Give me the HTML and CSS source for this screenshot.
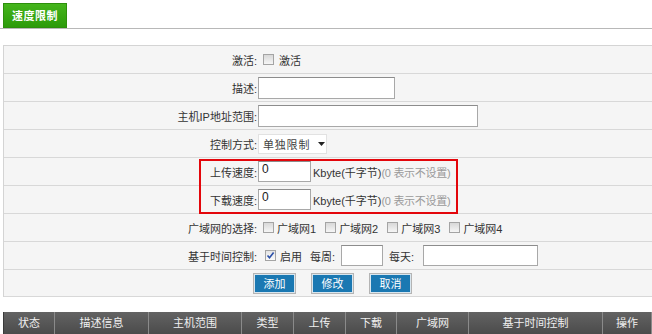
FILE: index.html
```html
<!DOCTYPE html>
<html lang="zh-CN">
<head>
    <meta charset="UTF-8">
    <title>速度限制</title>
    <link rel="stylesheet" href="styles.css">
</head>
<body>
    <div class="tabs">
        <div class="tab">速度限制</div>
    </div>

    <div class="form">
        <div class="row">
            <div class="lbl">激活:</div>
            <div class="val"><span class="chk"></span><span class="txt">激活</span></div>
        </div>
        <div class="row">
            <div class="lbl">描述:</div>
            <div class="val"><input class="field w-desc" type="text"></div>
        </div>
        <div class="row">
            <div class="lbl">主机IP地址范围:</div>
            <div class="val"><input class="field w-ip" type="text"></div>
        </div>
        <div class="row">
            <div class="lbl">控制方式:</div>
            <div class="val">
                <div class="select"><span>单独限制</span>
                    <svg width="7" height="4" viewBox="0 0 7 4"><path d="M0 0h7L3.5 4z" fill="#222"/></svg>
                </div>
            </div>
        </div>

        <div class="hl">
            <div class="row">
                <div class="lbl">上传速度:</div>
                <div class="val"><input class="field w-speed" type="text" value="0"><span class="unit">Kbyte(千字节)</span><span class="hint">(0 表示不设置)</span></div>
            </div>
            <div class="row">
                <div class="lbl">下载速度:</div>
                <div class="val"><input class="field w-speed" type="text" value="0"><span class="unit">Kbyte(千字节)</span><span class="hint">(0 表示不设置)</span></div>
            </div>
            <div class="mark"></div>
        </div>

        <div class="row">
            <div class="lbl">广域网的选择:</div>
            <div class="val wans">
                <span class="opt"><span class="chk"></span><span class="txt">广域网1</span></span>
                <span class="opt"><span class="chk"></span><span class="txt">广域网2</span></span>
                <span class="opt"><span class="chk"></span><span class="txt">广域网3</span></span>
                <span class="opt"><span class="chk"></span><span class="txt">广域网4</span></span>
            </div>
        </div>
        <div class="row">
            <div class="lbl">基于时间控制:</div>
            <div class="val time">
                <span class="chk on"><svg width="9" height="9" viewBox="0 0 9 9"><path d="M1.5 4.5l2 2.3L7.6 1.5" fill="none" stroke="#2a4fa8" stroke-width="1.6"/></svg></span>
                <span class="txt">启用</span>
                <span class="txt week">每周:</span>
                <input class="field w-week" type="text">
                <span class="txt day">每天:</span>
                <input class="field w-day" type="text">
            </div>
        </div>
        <div class="row buttons">
            <button class="btn">添加</button>
            <button class="btn">修改</button>
            <button class="btn">取消</button>
        </div>
    </div>

    <div class="list-head">
        <div>状态</div>
        <div>描述信息</div>
        <div>主机范围</div>
        <div>类型</div>
        <div>上传</div>
        <div>下载</div>
        <div>广域网</div>
        <div>基于时间控制</div>
        <div>操作</div>
    </div>
</body>
</html>
```

FILE: styles.css
```css
* {
    margin: 0;
    padding: 0;
    box-sizing: border-box;
}
body {
    font-family: 'Liberation Sans', 'Noto Sans CJK SC', sans-serif;
    font-size: 11px;
    color: #333;
    background-color: #fff;
    overflow: hidden;
}
.tabs {
    padding: 3px 0 0 3px;
    border-bottom: 1px solid #b8b8b8;
    height: 29px;
}
.tab {
    width: 64px;
    height: 25px;
    line-height: 25px;
    text-align: center;
    color: #fff;
    font-weight: bold;
    letter-spacing: 0.5px;
    background: linear-gradient(#45b51c, #2c9b0a);
    border: 1px solid #2d8f0c;
}
.form {
    margin: 16px 0 0 3px;
    border-top: 1px solid #d4d4d4;
    border-left: 1px solid #d4d4d4;
    background-color: #f5f5f5;
}
.row {
    display: grid;
    grid-template-columns: 254px 1fr;
    align-items: center;
    height: 28px;
    border-bottom: 1px solid #d8d8d8;
}
.lbl {
    text-align: right;
    padding-right: 1px;
}
.val {
    display: flex;
    align-items: center;
    white-space: nowrap;
}
.txt {
    margin-left: 5px;
}
.chk {
    display: inline-flex;
    align-items: center;
    justify-content: center;
    flex-shrink: 0;
    width: 11px;
    height: 11px;
    margin-left: 5px;
    border: 1px solid #a4a4a4;
    background: linear-gradient(#d8d8d8, #f6f6f6);
}
.chk.on {
    margin-left: 7px;
    background: linear-gradient(#e4e4e4, #fafafa);
}
.field {
    height: 22px;
    border: 1px solid #a8a8a8;
    border-top-color: #8c8c8c;
    background-color: #fff;
    font-family: 'Liberation Sans', sans-serif;
    font-size: 12px;
    color: #222;
    padding: 0 3px 6px;
    outline: none;
}
.w-desc { width: 137px; }
.w-ip { width: 220px; }
.w-speed { width: 53px; height: 21px; }
.w-week { width: 42px; height: 21px; margin-left: 6px; }
.w-day { width: 115px; height: 21px; margin-left: 9px; }
.select {
    display: flex;
    align-items: center;
    gap: 8px;
    width: 69px;
    height: 20px;
    padding-left: 4px;
    border: 1px solid #e2e2e2;
    background-color: #fff;
    font-size: 11px;
    letter-spacing: 0.8px;
    color: #444;
    white-space: nowrap;
}
.select svg {
    flex-shrink: 0;
}
.hl {
    position: relative;
}
.mark {
    position: absolute;
    left: 195px;
    top: 1px;
    width: 259px;
    height: 55px;
    border: 2px solid #e3060b;
}
.unit {
    margin-left: 2px;
    color: #333;
}
.hint {
    color: #9a9a9a;
    letter-spacing: -0.3px;
}
.wans .txt {
    margin-left: 3px;
}
.wans .opt + .opt {
    margin-left: 4px;
}
.time .txt {
    margin-left: 4px;
}
.time .week {
    margin-left: 8px;
}
.time .day {
    margin-left: 6px;
}
.buttons {
    display: flex;
    gap: 15px;
    padding-left: 249px;
    height: 27px;
}
.btn {
    width: 43px;
    height: 21px;
    background-color: #1a78b2;
    border: 1px solid #b4b4b4;
    box-shadow: inset 0 0 0 1px #d8e6ef;
    color: #fff;
    font-family: 'Liberation Sans', 'Noto Sans CJK SC', sans-serif;
    font-size: 11px;
}
.list-head {
    display: grid;
    grid-template-columns: 51px 94px 93px 52px 52px 51px 72px 134px 1fr;
    margin: 15px 0 0 3px;
    height: 22px;
    background: linear-gradient(#636363, #4b4b4b);
    border-left: 1px solid #3a3a3a;
}
.list-head div {
    line-height: 22px;
    text-align: center;
    color: #f0f0f0;
    border-right: 1px solid #8a8a8a;
}
```
